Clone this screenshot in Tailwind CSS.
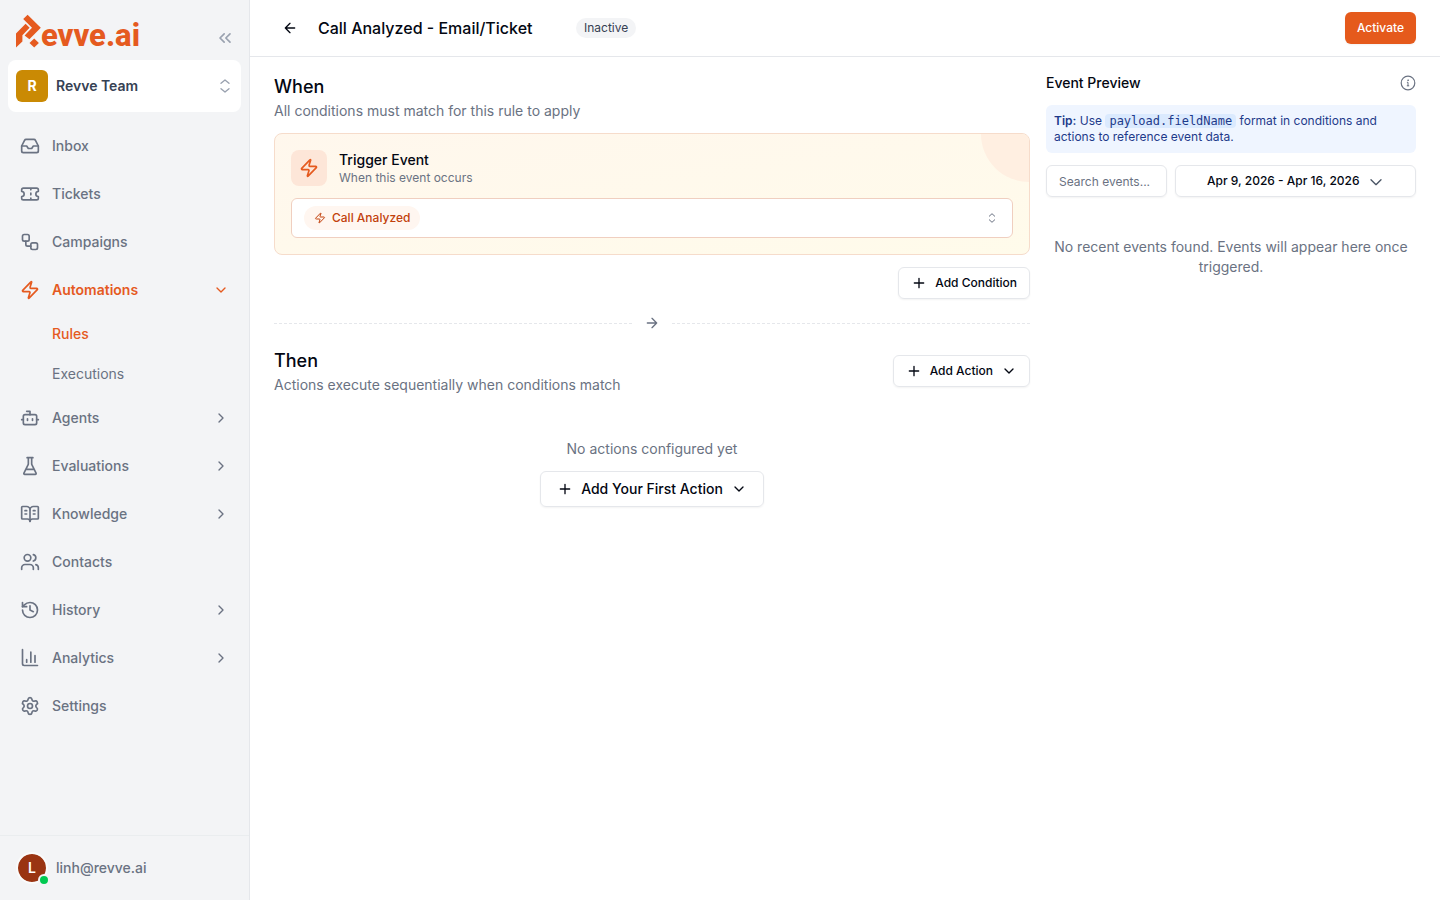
<!DOCTYPE html>
<html lang="en">

<head>
  <meta charset="UTF-8" />
  <meta name="viewport" content="width=device-width, initial-scale=1.0" />
  <title>Call Analyzed - Email/Ticket | Revve.ai</title>
  <script src="https://cdn.jsdelivr.net/npm/@tailwindcss/browser@4"></script>
</head>

<body class="flex min-h-screen bg-white font-[Inter,'Liberation_Sans',sans-serif] text-sm text-gray-950">

  <!-- Shared icons -->
  <svg class="hidden" aria-hidden="true">
    <symbol id="zap" viewBox="0 0 24 24"><path d="M4 14a1 1 0 0 1-.78-1.63l9.9-10.2a.5.5 0 0 1 .86.46l-1.92 6.02A1 1 0 0 0 13 10h7a1 1 0 0 1 .78 1.63l-9.9 10.2a.5.5 0 0 1-.86-.46l1.92-6.02A1 1 0 0 0 11 14z" /></symbol>
    <symbol id="chevron-right" viewBox="0 0 24 24"><path d="m9 18 6-6-6-6" /></symbol>
    <symbol id="chevron-down" viewBox="0 0 24 24"><path d="m6 9 6 6 6-6" /></symbol>
    <symbol id="plus" viewBox="0 0 24 24"><path d="M5 12h14M12 5v14" /></symbol>
  </svg>

  <!-- Sidebar -->
  <aside class="flex w-[250px] shrink-0 flex-col border-r border-gray-200 bg-gray-100">
    <div class="flex h-[60px] items-end justify-between pr-[14px] pb-3 pl-4">
      <a href="#" class="flex items-end text-[#e55a1f]" aria-label="Revve.ai">
        <svg class="h-[34px] w-[25px]" viewBox="0 0 25 34" fill="currentColor" aria-hidden="true">
          <path d="M11.6 0.8 24.8 13.8 13.4 25.2 8.6 21.4 16 13.8 7.2 5z" />
          <path d="M0 19.5 9.6 9.8 13.6 13.8 6.4 21.2 6.4 27.4 0 33.4z" />
          <path d="M18.2 24.4 22.9 29.1 18.2 33.6 13.5 29.1z" />
        </svg>
        <span class="font-[Roboto,sans-serif] text-[31px] leading-6 font-extrabold">evve.ai</span>
      </a>
      <button type="button" aria-label="Collapse sidebar" class="text-gray-400">
        <svg class="size-5" viewBox="0 0 24 24" fill="none" stroke="currentColor" stroke-width="2" stroke-linecap="round" stroke-linejoin="round"><path d="m11 17-5-5 5-5M18 17l-5-5 5-5" /></svg>
      </button>
    </div>

    <button type="button" class="mx-2 flex h-[52px] items-center gap-2 rounded-lg bg-white px-2 text-left">
      <span class="flex size-8 items-center justify-center rounded-md bg-[#ca8a04] font-bold text-white">R</span>
      <span class="flex-1 font-semibold text-gray-700">Revve Team</span>
      <svg class="size-4 text-gray-400" viewBox="0 0 24 24" fill="none" stroke="currentColor" stroke-width="2" stroke-linecap="round" stroke-linejoin="round"><path d="m6 16 6 5 6-5M6 8l6-5 6 5" /></svg>
    </button>

    <nav class="mt-3 flex-1 px-2 font-medium text-gray-500">
      <ul class="flex flex-col gap-1">
        <li><a href="#" class="flex h-11 items-center gap-3 px-3">
          <svg class="size-5" viewBox="0 0 24 24" fill="none" stroke="currentColor" stroke-width="2" stroke-linecap="round" stroke-linejoin="round"><path d="M22 12h-6l-2 3h-4l-2-3H2" /><path d="M5.45 5.11 2 12v6a2 2 0 0 0 2 2h16a2 2 0 0 0 2-2v-6l-3.45-6.89A2 2 0 0 0 16.76 4H7.24a2 2 0 0 0-1.79 1.11z" /></svg>
          Inbox</a></li>
        <li><a href="#" class="flex h-11 items-center gap-3 px-3">
          <svg class="size-5" viewBox="0 0 24 24" fill="none" stroke="currentColor" stroke-width="2" stroke-linecap="round" stroke-linejoin="round"><path d="M2 9a3 3 0 0 1 0 6v2a2 2 0 0 0 2 2h16a2 2 0 0 0 2-2v-2a3 3 0 0 1 0-6V7a2 2 0 0 0-2-2H4a2 2 0 0 0-2 2ZM13 5v2M13 17v2M13 11v2" /></svg>
          Tickets</a></li>
        <li><a href="#" class="flex h-11 items-center gap-3 px-3">
          <svg class="size-5" viewBox="0 0 24 24" fill="none" stroke="currentColor" stroke-width="2" stroke-linecap="round" stroke-linejoin="round"><rect width="8" height="8" x="3" y="3" rx="2" /><path d="M7 11v4a2 2 0 0 0 2 2h4" /><rect width="8" height="8" x="13" y="13" rx="2" /></svg>
          Campaigns</a></li>
        <li class="flex flex-col gap-1">
          <a href="#" class="flex h-11 items-center gap-3 px-3 font-semibold text-[#e55a1f]">
            <svg class="size-5" fill="none" stroke="currentColor" stroke-width="2" stroke-linecap="round" stroke-linejoin="round"><use href="#zap" /></svg>
            <span class="flex-1">Automations</span>
            <svg class="size-4" fill="none" stroke="currentColor" stroke-width="2" stroke-linecap="round" stroke-linejoin="round"><use href="#chevron-down" /></svg>
          </a>
          <ul class="flex flex-col gap-1 pl-11">
            <li><a href="#" class="flex h-9 items-center text-[#e55a1f]">Rules</a></li>
            <li><a href="#" class="flex h-9 items-center font-normal">Executions</a></li>
          </ul>
        </li>
        <li><a href="#" class="flex h-11 items-center gap-3 px-3">
          <svg class="size-5" viewBox="0 0 24 24" fill="none" stroke="currentColor" stroke-width="2" stroke-linecap="round" stroke-linejoin="round"><path d="M12 8V4H8" /><rect width="16" height="12" x="4" y="8" rx="2" /><path d="M2 14h2M20 14h2M15 13v2M9 13v2" /></svg>
          <span class="flex-1">Agents</span>
          <svg class="size-4" fill="none" stroke="currentColor" stroke-width="2" stroke-linecap="round" stroke-linejoin="round"><use href="#chevron-right" /></svg>
        </a></li>
        <li><a href="#" class="flex h-11 items-center gap-3 px-3">
          <svg class="size-5" viewBox="0 0 24 24" fill="none" stroke="currentColor" stroke-width="2" stroke-linecap="round" stroke-linejoin="round"><path d="M10 2v7.527a2 2 0 0 1-.211.896L4.72 20.55a1 1 0 0 0 .9 1.45h12.76a1 1 0 0 0 .9-1.45l-5.069-10.127A2 2 0 0 1 14 9.527V2M8.5 2h7M7 16h10" /></svg>
          <span class="flex-1">Evaluations</span>
          <svg class="size-4" fill="none" stroke="currentColor" stroke-width="2" stroke-linecap="round" stroke-linejoin="round"><use href="#chevron-right" /></svg>
        </a></li>
        <li><a href="#" class="flex h-11 items-center gap-3 px-3">
          <svg class="size-5" viewBox="0 0 24 24" fill="none" stroke="currentColor" stroke-width="2" stroke-linecap="round" stroke-linejoin="round"><path d="M12 7v14M16 12h2M16 8h2M6 12h2M6 8h2" /><path d="M3 18a1 1 0 0 1-1-1V4a1 1 0 0 1 1-1h5a4 4 0 0 1 4 4 4 4 0 0 1 4-4h5a1 1 0 0 1 1 1v13a1 1 0 0 1-1 1h-6a3 3 0 0 0-3 3 3 3 0 0 0-3-3z" /></svg>
          <span class="flex-1">Knowledge</span>
          <svg class="size-4" fill="none" stroke="currentColor" stroke-width="2" stroke-linecap="round" stroke-linejoin="round"><use href="#chevron-right" /></svg>
        </a></li>
        <li><a href="#" class="flex h-11 items-center gap-3 px-3">
          <svg class="size-5" viewBox="0 0 24 24" fill="none" stroke="currentColor" stroke-width="2" stroke-linecap="round" stroke-linejoin="round"><path d="M16 21v-2a4 4 0 0 0-4-4H6a4 4 0 0 0-4 4v2" /><circle cx="9" cy="7" r="4" /><path d="M22 21v-2a4 4 0 0 0-3-3.87M16 3.13a4 4 0 0 1 0 7.75" /></svg>
          Contacts</a></li>
        <li><a href="#" class="flex h-11 items-center gap-3 px-3">
          <svg class="size-5" viewBox="0 0 24 24" fill="none" stroke="currentColor" stroke-width="2" stroke-linecap="round" stroke-linejoin="round"><path d="M3 12a9 9 0 1 0 9-9 9.75 9.75 0 0 0-6.74 2.74L3 8" /><path d="M3 3v5h5M12 7v5l4 2" /></svg>
          <span class="flex-1">History</span>
          <svg class="size-4" fill="none" stroke="currentColor" stroke-width="2" stroke-linecap="round" stroke-linejoin="round"><use href="#chevron-right" /></svg>
        </a></li>
        <li><a href="#" class="flex h-11 items-center gap-3 px-3">
          <svg class="size-5" viewBox="0 0 24 24" fill="none" stroke="currentColor" stroke-width="2" stroke-linecap="round" stroke-linejoin="round"><path d="M3 2v17a2 2 0 0 0 2 2h16M13 17V5M18 17V9M8 17v-3" /></svg>
          <span class="flex-1">Analytics</span>
          <svg class="size-4" fill="none" stroke="currentColor" stroke-width="2" stroke-linecap="round" stroke-linejoin="round"><use href="#chevron-right" /></svg>
        </a></li>
        <li><a href="#" class="flex h-11 items-center gap-3 px-3">
          <svg class="size-5" viewBox="0 0 24 24" fill="none" stroke="currentColor" stroke-width="2" stroke-linecap="round" stroke-linejoin="round"><path d="M9.671 4.136a2.34 2.34 0 0 1 4.659 0 2.34 2.34 0 0 0 3.319 1.915 2.34 2.34 0 0 1 2.33 4.033 2.34 2.34 0 0 0 0 3.831 2.34 2.34 0 0 1-2.33 4.033 2.34 2.34 0 0 0-3.319 1.915 2.34 2.34 0 0 1-4.659 0 2.34 2.34 0 0 0-3.32-1.915 2.34 2.34 0 0 1-2.33-4.033 2.34 2.34 0 0 0 0-3.831A2.34 2.34 0 0 1 6.35 6.051a2.34 2.34 0 0 0 3.319-1.915" /><circle cx="12" cy="12" r="3" /></svg>
          Settings</a></li>
      </ul>
    </nav>

    <button type="button" class="flex h-[65px] items-center gap-2 border-t border-gray-200/60 px-4 text-left font-medium text-gray-500">
      <span class="relative flex size-8 items-center justify-center rounded-full border-2 border-white/60 bg-[#9a3412] bg-clip-padding font-semibold text-white">
        L
        <span class="absolute -right-1 -bottom-1 size-3 rounded-full border-2 border-gray-100 bg-green-500"></span>
      </span>
      linh@revve.ai
    </button>
  </aside>

  <div class="min-w-0 flex-1">
    <!-- Top bar -->
    <header class="flex h-[57px] items-center gap-3 border-b border-gray-200 px-6">
      <button type="button" aria-label="Back" class="flex size-8 items-center justify-center">
        <svg class="size-4" viewBox="0 0 24 24" fill="none" stroke="currentColor" stroke-width="2" stroke-linecap="round" stroke-linejoin="round"><path d="m12 19-7-7 7-7M19 12H5" /></svg>
      </button>
      <h1 class="w-[246px] text-base font-medium">Call Analyzed - Email/Ticket</h1>
      <span class="rounded-full bg-gray-100 px-2 py-[2px] text-xs text-gray-700">Inactive</span>
      <button type="button" class="ml-auto h-8 rounded-md bg-[#e55a1c] px-3 text-xs font-medium text-white shadow-xs">Activate</button>
    </header>

    <main class="grid grid-cols-3 gap-4 px-6 py-4">
      <!-- Rule editor -->
      <div class="col-span-2">
        <h2 class="text-lg leading-7 font-medium">When</h2>
        <p class="text-gray-500">All conditions must match for this rule to apply</p>

        <section class="relative mt-3 overflow-hidden rounded-lg border border-[#f6dccb] bg-linear-to-br from-orange-50 to-amber-50 p-4">
          <div class="absolute -top-12 -right-12 size-24 rounded-full bg-[#ffefe1]"></div>
          <div class="flex items-center gap-3">
            <div class="flex size-9 items-center justify-center rounded-lg bg-[#fde6d8] text-[#e55a1f]">
              <svg class="size-5" fill="none" stroke="currentColor" stroke-width="2" stroke-linecap="round" stroke-linejoin="round"><use href="#zap" /></svg>
            </div>
            <div>
              <h3 class="font-medium" id="trigger-label">Trigger Event</h3>
              <p class="text-xs text-gray-500">When this event occurs</p>
            </div>
          </div>
          <button type="button" role="combobox" aria-expanded="false" aria-labelledby="trigger-label" class="relative mt-3 flex h-10 w-full items-center justify-between rounded-md border border-[#f0cfc0] bg-white px-3">
            <span class="flex h-6 items-center gap-1.5 rounded-full bg-[#fff6f0] px-2.5 text-xs font-medium text-[#c2410c]">
              <svg class="size-3" fill="none" stroke="currentColor" stroke-width="2" stroke-linecap="round" stroke-linejoin="round"><use href="#zap" /></svg>
              Call Analyzed
            </span>
            <svg class="size-4 text-gray-500" viewBox="0 0 16 16" fill="none" stroke="currentColor" stroke-linecap="round" stroke-linejoin="round"><path d="M5.3 6.2 8 3.7l2.7 2.5M5.3 9.8 8 12.3l2.7-2.5" /></svg>
          </button>
        </section>

        <div class="mt-3 flex justify-end">
          <button type="button" class="flex h-8 items-center gap-2 rounded-md border border-gray-200 px-3 text-xs font-medium shadow-xs">
            <svg class="size-4" fill="none" stroke="currentColor" stroke-width="2" stroke-linecap="round" stroke-linejoin="round"><use href="#plus" /></svg>
            Add Condition
          </button>
        </div>

        <div class="my-4 flex items-center gap-3 text-gray-500">
          <div class="flex-1 border-t border-dashed border-gray-200"></div>
          <svg class="size-4" viewBox="0 0 24 24" fill="none" stroke="currentColor" stroke-width="2" stroke-linecap="round" stroke-linejoin="round"><path d="M5 12h14M12 5l7 7-7 7" /></svg>
          <div class="flex-1 border-t border-dashed border-gray-200"></div>
        </div>

        <div class="flex items-center justify-between">
          <div>
            <h2 class="text-lg leading-7 font-medium">Then</h2>
            <p class="text-gray-500">Actions execute sequentially when conditions match</p>
          </div>
          <button type="button" class="flex h-8 items-center gap-2 rounded-md border border-gray-200 px-3 text-xs font-medium shadow-xs">
            <svg class="size-4" fill="none" stroke="currentColor" stroke-width="2" stroke-linecap="round" stroke-linejoin="round"><use href="#plus" /></svg>
            Add Action
            <svg class="size-4" fill="none" stroke="currentColor" stroke-width="2" stroke-linecap="round" stroke-linejoin="round"><use href="#chevron-down" /></svg>
          </button>
        </div>

        <div class="mt-3 flex flex-col items-center gap-3 py-8">
          <p class="text-gray-500">No actions configured yet</p>
          <button type="button" class="flex h-9 items-center gap-2 rounded-md border border-gray-200 px-4 font-medium shadow-xs">
            <svg class="size-4" fill="none" stroke="currentColor" stroke-width="2" stroke-linecap="round" stroke-linejoin="round"><use href="#plus" /></svg>
            Add Your First Action
            <svg class="size-4" fill="none" stroke="currentColor" stroke-width="2" stroke-linecap="round" stroke-linejoin="round"><use href="#chevron-down" /></svg>
          </button>
        </div>
      </div>

      <!-- Event preview -->
      <section>
        <div class="flex items-center justify-between">
          <h2 class="font-medium">Event Preview</h2>
          <button type="button" aria-label="About event preview" class="text-gray-500">
            <svg class="size-4" viewBox="0 0 16 16" fill="none" stroke="currentColor" stroke-linecap="round"><circle cx="8" cy="8" r="6.8" stroke-width="1.2" /><path d="M7.3 7.3H8v3.4M7.2 10.8h1.6" /><circle cx="8" cy="5.2" r=".3" /></svg>
          </button>
        </div>
        <p class="mt-3 rounded-md bg-[#eff5ff] p-2 text-xs text-[#1e3a8a]">
          <strong class="font-semibold">Tip:</strong> Use
          <code class="rounded bg-[#dbeafe] px-1 font-['DejaVu_Sans_Mono',monospace]">payload.fieldName</code>
          format in conditions and actions to reference event data.
        </p>
        <div class="mt-3 grid grid-cols-[1fr_2fr] gap-2">
          <input type="text" aria-label="Search events" placeholder="Search events..." class="h-8 w-full min-w-0 rounded-md border border-gray-200 px-3 text-xs shadow-xs placeholder:text-gray-500" />
          <button type="button" class="flex h-8 items-center justify-center gap-2 rounded-md border border-gray-200 text-xs font-medium shadow-xs">
            Apr 9, 2026 - Apr 16, 2026
            <svg class="size-4 text-gray-600" viewBox="0 0 24 24" fill="none" stroke="currentColor" stroke-width="2" stroke-linecap="round" stroke-linejoin="round"><path d="m19.5 10-7.5 7.5L4.5 10" /></svg>
          </button>
        </div>
        <p class="mt-10 text-center text-gray-500">No recent events found. Events will appear here once triggered.</p>
      </section>
    </main>
  </div>
</body>

</html>
